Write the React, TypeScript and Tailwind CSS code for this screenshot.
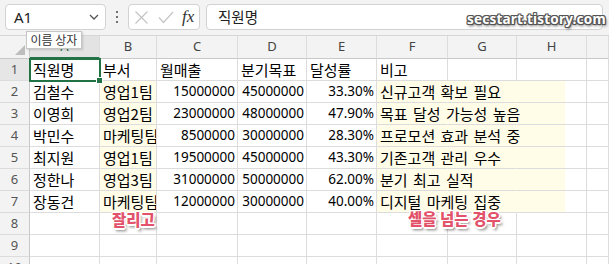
import React from "react";

type Cell = { t: string; num?: boolean };

const rows: Cell[][] = [
  [{ t: "직원명" }, { t: "부서" }, { t: "월매출" }, { t: "분기목표" }, { t: "달성률" }, { t: "비고" }],
  [{ t: "김철수" }, { t: "영업1팀" }, { t: "15000000", num: true }, { t: "45000000", num: true }, { t: "33.30%", num: true }, { t: "신규고객 확보 필요" }],
  [{ t: "이영희" }, { t: "영업2팀" }, { t: "23000000", num: true }, { t: "48000000", num: true }, { t: "47.90%", num: true }, { t: "목표 달성 가능성 높음" }],
  [{ t: "박민수" }, { t: "마케팅팀" }, { t: "8500000", num: true }, { t: "30000000", num: true }, { t: "28.30%", num: true }, { t: "프로모션 효과 분석 중" }],
  [{ t: "최지원" }, { t: "영업1팀" }, { t: "19500000", num: true }, { t: "45000000", num: true }, { t: "43.30%", num: true }, { t: "기존고객 관리 우수" }],
  [{ t: "정한나" }, { t: "영업3팀" }, { t: "31000000", num: true }, { t: "50000000", num: true }, { t: "62.00%", num: true }, { t: "분기 최고 실적" }],
  [{ t: "장동건" }, { t: "마케팅팀" }, { t: "12000000", num: true }, { t: "30000000", num: true }, { t: "40.00%", num: true }, { t: "디지털 마케팅 집중" }],
  [],
  [],
  [],
];

const letters = ["A", "B", "C", "D", "E", "F", "G", "H", ""];

const font = "font-['Noto_Sans','Noto_Sans_CJK_KR',sans-serif]";
const kfont = "font-['Noto_Sans_CJK_KR',sans-serif]";

const outlineRed =
  "[text-shadow:-1px_-1px_0_#fff,1px_-1px_0_#fff,-1px_1px_0_#fff,1px_1px_0_#fff,0_-1.5px_0_#fff,0_1.5px_0_#fff,-1.5px_0_0_#fff,1.5px_0_0_#fff,2px_3px_3px_rgba(0,0,0,0.55)]";
const outlineMark =
  "[text-shadow:-1px_-1px_0_#555,1px_-1px_0_#555,-1px_1px_0_#555,1px_1px_0_#555,0_-1px_0_#555,0_1px_0_#555,-1px_0_0_#555,1px_0_0_#555,1px_2px_3px_rgba(0,0,0,0.7)]";

function DataRow({ r, cells }: { r: number; cells: Cell[] }) {
  const yellowRow = r >= 2 && r <= 7;
  const base = "h-[22px] border-b border-r border-[#dcdcdc] flex items-center";
  return (
    <>
      <div
        className={`h-[22px] border-b border-r border-[#c8c8c8] border-b-[#dcdcdc] flex items-center justify-center text-[13px] text-[#555] ${
          r === 1 ? "bg-[#e6e6e6]" : "bg-[#f3f3f3]"
        }`}
      >
        {r}
      </div>
      {Array.from({ length: 9 }).map((_, c) => {
        const cell = cells[c];
        let cls = base;
        if (yellowRow && (c === 1 || c === 5 || c === 6)) cls += " bg-[#fffce8]";
        if (yellowRow && (c === 5 || c === 6)) cls += " border-r-transparent";
        if (yellowRow && c === 7) cls += " bg-[linear-gradient(to_right,#fffce8_48px,#ffffff_48px)]";
        if (c === 5) cls += " overflow-visible";
        else cls += " overflow-hidden";
        const isA1 = r === 1 && c === 0;
        return (
          <div key={c} className={`${cls} ${isA1 ? "relative overflow-visible" : ""}`}>
            {cell && (
              <span
                className={`whitespace-nowrap ${
                  cell.num
                    ? "ml-auto pr-[2px] text-[13.5px] font-['Noto_Sans',sans-serif]"
                    : `pl-[3px] text-[15px] [word-spacing:2px] ${kfont}`
                } ${c === 5 ? "relative z-10" : ""} text-black leading-none`}
              >
                {cell.t}
              </span>
            )}
            {isA1 && (
              <div className="absolute -left-[1px] -top-[1px] w-[72px] h-[24px] border-2 border-[#217346] z-20 pointer-events-none">
                <div className="absolute -right-[4px] -bottom-[4px] w-[7px] h-[7px] bg-[#217346] border border-white" />
              </div>
            )}
          </div>
        );
      })}
    </>
  );
}

export default function App() {
  return (
    <div className={`relative w-[609px] h-[264px] overflow-hidden bg-white ${font}`}>
      {/* toolbar */}
      <div className="h-[36px] bg-[#f3f3f3] border-b border-[#d6d6d6] flex items-start pt-[4px]">
        <div className="ml-[5px] w-[101px] h-[26px] bg-white border border-[#d2d2d2] rounded-[4px] flex items-center pl-[8px] pr-[6px]">
          <span className="text-[15px] text-[#222] font-['Noto_Sans',sans-serif]">A1</span>
          <svg className="ml-auto" width="10" height="6" viewBox="0 0 10 6">
            <path d="M1 1 L5 5 L9 1" fill="none" stroke="#555" strokeWidth="1.3" />
          </svg>
        </div>
        <div className="w-[22px] h-[26px] flex flex-col items-center justify-center gap-[3px]">
          <span className="w-[2px] h-[2px] bg-[#444] rounded-full" />
          <span className="w-[2px] h-[2px] bg-[#444] rounded-full" />
          <span className="w-[2px] h-[2px] bg-[#444] rounded-full" />
        </div>
        <div className="w-[72px] h-[26px] bg-white border border-[#d2d2d2] rounded-[4px] flex items-center pl-[4px]">
          <svg width="15" height="15" viewBox="0 0 15 15" className="ml-[1px]">
            <path d="M1.5 1.5 L13.5 13.5 M13.5 1.5 L1.5 13.5" stroke="#c4c4c4" strokeWidth="1.2" fill="none" />
          </svg>
          <svg width="16" height="15" viewBox="0 0 16 15" className="ml-[9px]">
            <path d="M1 7.5 L5.5 12.5 L15 2" stroke="#c4c4c4" strokeWidth="1.2" fill="none" />
          </svg>
          <span className="ml-[8px] text-[17px] italic text-[#333] font-['Liberation_Serif',serif] leading-none -mt-[2px]">
            fx
          </span>
        </div>
        <div className="ml-[6px] w-[397px] h-[26px] bg-white border border-[#d2d2d2] rounded-[4px] flex items-center pl-[11px]">
          <span className={`text-[14.5px] text-[#222] ${kfont}`}>직원명</span>
        </div>
      </div>

      {/* grid */}
      <div className="grid grid-cols-[30px_70px_57px_81px_69px_70px_71px_69px_70px_22px]">
        {/* header row */}
        <div className="h-[23px] bg-[#f3f3f3] border-b border-r border-[#c8c8c8] relative flex items-end justify-end pr-[4px] pb-[3px]">
          <svg width="10" height="10" viewBox="0 0 10 10">
            <path d="M10 0 L10 10 L0 10 Z" fill="#bdbdbd" />
          </svg>
        </div>
        {letters.map((l, i) => (
          <div
            key={i}
            className={`h-[23px] border-r border-[#dcdcdc] flex items-center justify-center text-[13px] ${
              i === 0
                ? "bg-[#e3e3e3] border-b-2 border-b-[#217346] text-[#1e6b40]"
                : "bg-[#f3f3f3] border-b border-b-[#c8c8c8] text-[#444]"
            }`}
          >
            {l}
          </div>
        ))}
        {rows.map((cells, i) => (
          <DataRow key={i} r={i + 1} cells={cells} />
        ))}
      </div>

      {/* Name box tooltip */}
      <div className={`absolute left-[26px] top-[31px] w-[56px] h-[18px] bg-white border border-[#c6c6c6] shadow-[1px_1px_2px_rgba(0,0,0,0.15)] flex items-center justify-center text-[12px] text-[#333] z-30 ${kfont}`}>
        이름 상자
      </div>

      {/* watermark */}
      <div className={`absolute left-[467px] top-[9px] text-[13.5px] font-bold text-white tracking-[0.2px] z-30 font-['Noto_Sans',sans-serif] ${outlineMark}`}>
        secstart.tistory.com
      </div>

      {/* annotation labels */}
      <div className={`absolute left-[112px] top-[208px] text-[15.5px] font-black text-[#e2536b] z-30 ${kfont} ${outlineRed}`}>
        잘리고
      </div>
      <div className={`absolute left-[408px] top-[207px] text-[15.5px] font-black text-[#e2536b] z-30 ${kfont} ${outlineRed}`}>
        셀을 넘는 경우
      </div>
    </div>
  );
}
